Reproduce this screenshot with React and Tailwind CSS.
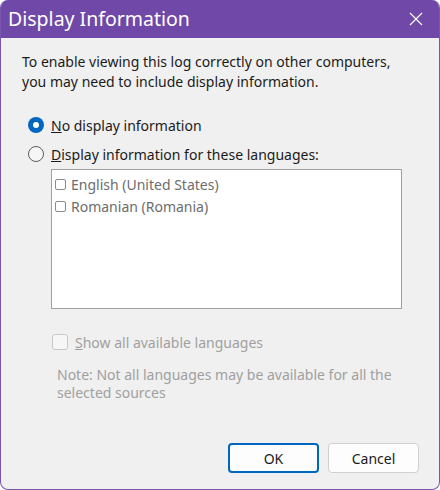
import React from 'react';

const font = { fontFamily: '"Segoe UI", "Noto Sans", "Open Sans", sans-serif' };

const Radio = ({ checked }) =>
    checked ? (
        <span className="w-4 h-4 rounded-full bg-[#0067c0] flex items-center justify-center shrink-0">
            <span className="w-[6px] h-[6px] rounded-full bg-white" />
        </span>
    ) : (
        <span className="w-4 h-4 rounded-full border border-[#5c5c5c] bg-[#f6f6f6] shrink-0" />
    );

const App = () => {
    const langs = ['English (United States)', 'Romanian (Romania)'];

    return (
        <div className="w-[440px] h-[490px] bg-white text-[#1b1b1b]" style={font}>
            <div className="w-full h-full flex flex-col rounded-[8px] border-x border-b border-[#7a55b0] overflow-hidden bg-[#f0f0f0]">
                {/* title bar */}
                <div className="h-[38px] bg-[#7048a8] flex items-center justify-between pl-[7px] pr-[16px] shrink-0">
                    <span className="text-white text-[19.5px] leading-none">Display Information</span>
                    <svg width="14" height="14" viewBox="0 0 14 14" className="text-white">
                        <path d="M1 1L13 13M13 1L1 13" stroke="currentColor" strokeWidth="1.2" />
                    </svg>
                </div>

                <div className="flex-1 flex flex-col pl-[21px] pr-[10px] pt-[14px] text-[14px]">
                    <p className="leading-[20px]">
                        To enable viewing this log correctly on other computers,<br />
                        you may need to include display information.
                    </p>

                    <div className="mt-[23px] pl-[6px] flex flex-col">
                        <label className="flex items-center gap-[7px] h-[20px]">
                            <Radio checked />
                            <span><u>N</u>o display information</span>
                        </label>
                        <label className="flex items-center gap-[7px] h-[20px] mt-[9px]">
                            <Radio />
                            <span><u>D</u>isplay information for these languages:</span>
                        </label>

                        <div className="ml-[23px] mt-[5px] w-[351px] h-[140px] bg-white border border-[#a0a0a0] pt-[3px] text-[#6d6d6d]">
                            {langs.map((l) => (
                                <div key={l} className="flex items-center gap-[5px] h-[22px] pl-[3px]">
                                    <span className="w-[11px] h-[11px] border border-[#8a8a8a] rounded-[2px] bg-white" />
                                    <span>{l}</span>
                                </div>
                            ))}
                        </div>

                        <label className="ml-[24px] mt-[24px] flex items-center gap-[7px] h-[18px] text-[#a0a0a0]">
                            <span className="w-4 h-4 border border-[#c8c8c8] rounded-[3px] bg-[#f6f6f6]" />
                            <span><u>S</u>how all available languages</span>
                        </label>

                        <p className="ml-[29px] mt-[15px] leading-[18px] text-[#a0a0a0]">
                            Note: Not all languages may be available for all the<br />
                            selected sources
                        </p>
                    </div>

                    <div className="mt-auto mb-[16px] mr-[10px] flex justify-end gap-[9px]">
                        <button className="w-[91px] h-[30px] rounded-[4px] bg-[#fdfdfd] border-2 border-[#0067c0] text-[#1b1b1b]">
                            OK
                        </button>
                        <button className="w-[91px] h-[30px] rounded-[4px] bg-[#fdfdfd] border border-[#d0d0d0] text-[#1b1b1b]">
                            Cancel
                        </button>
                    </div>
                </div>
            </div>
        </div>
    );
};

export default App;
